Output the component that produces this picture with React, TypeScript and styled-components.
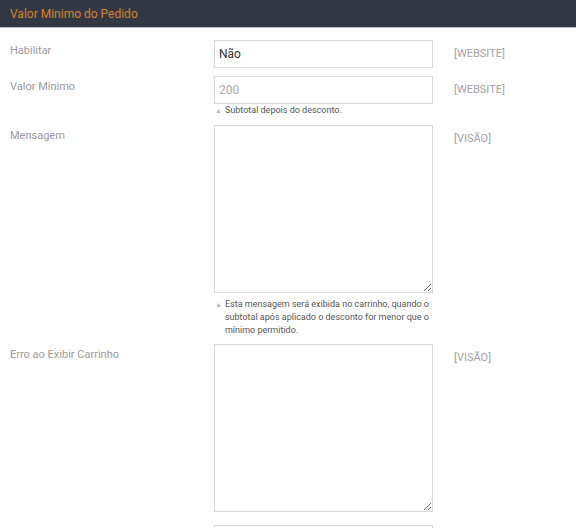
import styled, { createGlobalStyle } from 'styled-components'

const GlobalStyle = createGlobalStyle`
  html, body {
    margin: 0;
    padding: 0;
    background: #ffffff;
    font-family: Roboto, "Liberation Sans", Arial, sans-serif;
  }
`

const Panel = styled.div`
  width: 576px;
  background: #ffffff;
`

const Header = styled.div`
  height: 27px;
  background: #323843;
  border-bottom: 1px solid #b8bec6;
  display: flex;
  align-items: center;
  padding-left: 10px;
  color: #d9822b;
  font-size: 12px;
`

const Body = styled.div`
  padding: 12px 0 0 10px;
  display: flex;
  flex-direction: column;
`

const Row = styled.div`
  display: grid;
  grid-template-columns: 204px 219px auto;
  padding-bottom: 8px;
`

const Label = styled.div`
  color: #9a9a9a;
  font-size: 11px;
  line-height: 15px;
  padding-top: 3px;
`

const Scope = styled.div`
  color: #a3a3a3;
  font-size: 11px;
  line-height: 15px;
  padding: 6px 0 0 21px;
`

const Field = styled.div`
  display: flex;
  flex-direction: column;
`

const Input = styled.input<{ $muted?: boolean }>`
  box-sizing: border-box;
  width: 219px;
  height: 28px;
  border: 1px solid #d6d6d9;
  padding: 0 4px;
  font-family: inherit;
  font-size: 12px;
  color: ${({ $muted }) => ($muted ? '#aaaaaa' : '#333333')};
  background: #ffffff;
  outline: none;
  margin: 0;
`

const TextArea = styled.textarea`
  box-sizing: border-box;
  display: block;
  width: 219px;
  height: 168px;
  border: 1px solid #d6d6d9;
  padding: 4px;
  font-family: inherit;
  font-size: 12px;
  margin: 0 0 5px 0;
  outline: none;
  resize: vertical;
`

const Note = styled.div`
  display: flex;
  gap: 3px;
  padding-left: 1px;
  margin-bottom: -1px;
  color: #555555;
  font-size: 9px;
  line-height: 13px;
`

const Arrow = styled.span`
  color: #b5b5b5;
  font-size: 7px;
  line-height: 13px;
  padding-top: 1px;
  flex: none;
`

function Hint({ children }: { children: string }) {
  return (
    <Note>
      <Arrow>▲</Arrow>
      <span>{children}</span>
    </Note>
  )
}

export default function App() {
  return (
    <>
      <GlobalStyle />
      <Panel>
        <Header>Valor Minimo do Pedido</Header>
        <Body>
          <Row>
            <Label>Habilitar</Label>
            <Field>
              <Input readOnly value="Não" />
            </Field>
            <Scope>[WEBSITE]</Scope>
          </Row>
          <Row>
            <Label>Valor Minimo</Label>
            <Field>
              <Input readOnly $muted value="200" />
              <Hint>Subtotal depois do desconto.</Hint>
            </Field>
            <Scope>[WEBSITE]</Scope>
          </Row>
          <Row>
            <Label>Mensagem</Label>
            <Field>
              <TextArea readOnly />
              <Hint>
                Esta mensagem será exibida no carrinho, quando o subtotal após aplicado o desconto for menor que o mínimo permitido.
              </Hint>
            </Field>
            <Scope>[VISÃO]</Scope>
          </Row>
          <Row>
            <Label>Erro ao Exibir Carrinho</Label>
            <Field>
              <TextArea readOnly />
            </Field>
            <Scope>[VISÃO]</Scope>
          </Row>
          <Row>
            <Label />
            <Field>
              <TextArea readOnly />
            </Field>
            <Scope />
          </Row>
        </Body>
      </Panel>
    </>
  )
}
